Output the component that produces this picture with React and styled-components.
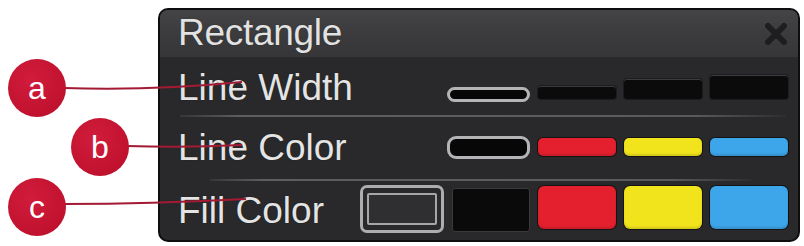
import React from "react";
import styled, { createGlobalStyle } from "styled-components";

const Global = createGlobalStyle`
  html, body { margin: 0; padding: 0; background: #ffffff; }
  body { font-family: "Liberation Sans", Arial, sans-serif; }
`;

const Page = styled.div`
  position: relative;
  width: 804px;
  height: 246px;
  box-sizing: border-box;
  padding: 8px 4px 0 158px;
  background: #ffffff;
  overflow: hidden;
`;

const Panel = styled.div`
  width: 642px;
  height: 234px;
  box-sizing: border-box;
  border: 2px solid #0e0e0f;
  border-radius: 10px;
  background: #29292b;
  overflow: hidden;
  display: flex;
  flex-direction: column;
`;

const TitleBar = styled.div`
  height: 47px;
  flex: 0 0 47px;
  display: flex;
  align-items: flex-start;
  justify-content: space-between;
  padding: 4px 11px 0 18px;
  box-sizing: border-box;
  background: linear-gradient(#444446, #3a3a3c 60%, #363638);
`;

const Title = styled.div`
  font-size: 37px;
  line-height: 37px;
  color: #e2e2e2;
  text-shadow: 0 0 1px rgba(0, 0, 0, 0.6);
  letter-spacing: -0.3px;
`;

const Close = styled.svg`
  margin-top: 9px;
  width: 22px;
  height: 22px;
`;

const Row = styled.div`
  height: ${(p) => p.$h}px;
  flex: 0 0 ${(p) => p.$h}px;
  display: flex;
  align-items: flex-start;
  padding: 0 10px 0 18px;
  box-sizing: border-box;
`;

const Separator = styled.div`
  height: 2px;
  flex: 0 0 2px;
  margin: 0 ${(p) => p.$right}px 0 ${(p) => p.$left}px;
  background: linear-gradient(
    90deg,
    rgba(110, 110, 112, 0.2),
    #5e5e60 10%,
    #5a5a5c 85%,
    rgba(90, 90, 92, 0.1)
  );
`;

const Label = styled.div`
  font-size: 37px;
  line-height: 37px;
  color: #e4e4e4;
  margin-top: ${(p) => p.$top}px;
  text-shadow: 0 0 1px rgba(0, 0, 0, 0.6);
  white-space: nowrap;
`;

const Swatches = styled.div`
  margin-left: auto;
  margin-top: ${(p) => p.$top}px;
  display: flex;
  align-items: flex-start;
  gap: 8px;
`;

const WidthSwatch = styled.div`
  width: 78px;
  height: ${(p) => p.$h}px;
  margin-top: ${(p) => p.$top}px;
  border-radius: 3px;
  background: #0b0b0c;
  box-shadow: inset 0 1px 0 #3c3c3e, 0 0 0 1px #1c1c1e;
`;

const SelectedPill = styled.div`
  width: 83px;
  height: ${(p) => p.$h}px;
  box-sizing: border-box;
  border: 3px solid #b4b4b6;
  border-radius: 9px;
  background: #070707;
`;

const ColorSwatch = styled.div`
  width: 78px;
  height: ${(p) => p.$h}px;
  margin-top: ${(p) => p.$top}px;
  border-radius: ${(p) => p.$r}px;
  background: ${(p) => p.$c};
  box-shadow: 0 0 0 1px #141414, inset 0 -2px 2px rgba(0, 0, 0, 0.12);
`;

const FillNone = styled.div`
  width: 84px;
  height: 48px;
  box-sizing: border-box;
  border: 3px solid #adadaf;
  border-radius: 7px;
  padding: 5px 4px;
  background: #29292b;
  display: flex;
`;

const FillNoneInner = styled.div`
  flex: 1;
  border: 2px solid #a6a6a8;
  border-radius: 2px;
  background: #2f2f31;
`;

const FillBlack = styled.div`
  width: 78px;
  height: 44px;
  margin-top: 3px;
  box-sizing: border-box;
  border: 1px solid #3a3a3c;
  border-radius: 3px;
  background: #0a0a0a;
`;

const Overlay = styled.svg`
  position: absolute;
  left: 0;
  top: 0;
  width: 804px;
  height: 246px;
  pointer-events: none;
`;

const Callout = styled.div`
  position: absolute;
  left: ${(p) => p.$x - 29}px;
  top: ${(p) => p.$y - 29}px;
  width: 58px;
  height: 58px;
  border-radius: 50%;
  background: radial-gradient(circle at 40% 35%, #d21c3c, #c0122f 70%, #b30f2a);
  color: #ffffff;
  font-size: 32px;
  line-height: 58px;
  text-align: center;
  font-family: "Liberation Sans", Arial, sans-serif;
`;

const colors = [
  { c: "#e4202f" },
  { c: "#f1e41d" },
  { c: "#3da5e9" },
];

export default function App() {
  return (
    <>
      <Global />
      <Page>
        <Panel>
          <TitleBar>
            <Title>Rectangle</Title>
            <Close viewBox="0 0 22 22">
              <path
                d="M3 3 L19 19 M19 3 L3 19"
                stroke="#1e1e20"
                strokeWidth="6"
                strokeLinecap="round"
              />
            </Close>
          </TitleBar>

          <Row $h={58}>
            <Label $top={12}>Line Width</Label>
            <Swatches $top={18}>
              <div style={{ marginTop: 12 }}>
                <SelectedPill $h={15} />
              </div>
              <WidthSwatch $h={13} $top={11} />
              <WidthSwatch $h={20} $top={4} />
              <WidthSwatch $h={24} $top={0} />
            </Swatches>
          </Row>
          <Separator $left={20} $right={12} />

          <Row $h={62}>
            <Label $top={12}>Line Color</Label>
            <Swatches $top={19}>
              <SelectedPill $h={23} />
              {colors.map((s) => (
                <ColorSwatch key={s.c} $c={s.c} $h={18} $top={2} $r={5} />
              ))}
            </Swatches>
          </Row>
          <Separator $left={50} $right={46} />

          <Row $h={59}>
            <Label $top={11}>Fill Color</Label>
            <Swatches $top={4}>
              <FillNone>
                <FillNoneInner />
              </FillNone>
              <FillBlack />
              {colors.map((s) => (
                <ColorSwatch key={s.c} $c={s.c} $h={43} $top={1} $r={6} />
              ))}
            </Swatches>
          </Row>
        </Panel>

        <Overlay viewBox="0 0 804 246">
          <path d="M 64 88 Q 150 91 242 82" stroke="#a31a35" strokeWidth="2" fill="none" />
          <path d="M 127 146 Q 185 148 242 145" stroke="#a31a35" strokeWidth="2" fill="none" />
          <path d="M 64 204 Q 150 204 246 199" stroke="#a31a35" strokeWidth="2" fill="none" />
        </Overlay>
        <Callout $x={37} $y={88}>a</Callout>
        <Callout $x={100} $y={147}>b</Callout>
        <Callout $x={37} $y={207}>c</Callout>
      </Page>
    </>
  );
}
